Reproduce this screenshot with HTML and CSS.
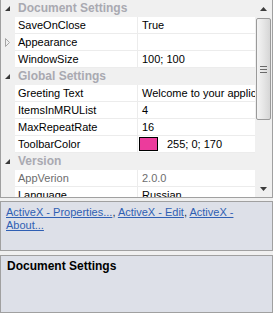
FILE: index.html
```html
<!DOCTYPE html>
<html lang="en">
<head>
  <meta charset="UTF-8" />
  <meta name="viewport" content="width=device-width, initial-scale=1.0">
  <title>Property Grid</title>
  <link rel="stylesheet" href="styles.css">
</head>

<body>

  <div class="grid">
    <div class="rows">

      <div class="category">
        <span class="gutter">
          <svg width="5" height="5" viewBox="0 0 5 5"><polygon points="5,0 5,5 0,5" fill="#3a3a3a" /></svg>
        </span>
        <span class="category-name">Document Settings</span>
      </div>
      <div class="row">
        <span class="gutter"></span>
        <span class="name">SaveOnClose</span>
        <span class="value">True</span>
      </div>
      <div class="row">
        <span class="gutter">
          <svg width="5" height="9" viewBox="0 0 5 9"><polygon points="0.5,0.5 4.5,4.5 0.5,8.5" fill="none" stroke="#a6a6a6" /></svg>
        </span>
        <span class="name">Appearance</span>
        <span class="value"></span>
      </div>
      <div class="row">
        <span class="gutter"></span>
        <span class="name">WindowSize</span>
        <span class="value">100; 100</span>
      </div>

      <div class="category">
        <span class="gutter">
          <svg width="5" height="5" viewBox="0 0 5 5"><polygon points="5,0 5,5 0,5" fill="#3a3a3a" /></svg>
        </span>
        <span class="category-name">Global Settings</span>
      </div>
      <div class="row">
        <span class="gutter"></span>
        <span class="name">Greeting Text</span>
        <span class="value">Welcome to your application</span>
      </div>
      <div class="row">
        <span class="gutter"></span>
        <span class="name">ItemsInMRUList</span>
        <span class="value">4</span>
      </div>
      <div class="row">
        <span class="gutter"></span>
        <span class="name">MaxRepeatRate</span>
        <span class="value">16</span>
      </div>
      <div class="row">
        <span class="gutter"></span>
        <span class="name">ToolbarColor</span>
        <span class="value value-color"><span class="swatch"></span>255; 0; 170</span>
      </div>

      <div class="category">
        <span class="gutter">
          <svg width="5" height="5" viewBox="0 0 5 5"><polygon points="5,0 5,5 0,5" fill="#3a3a3a" /></svg>
        </span>
        <span class="category-name">Version</span>
      </div>
      <div class="row readonly">
        <span class="gutter"></span>
        <span class="name">AppVerion</span>
        <span class="value">2.0.0</span>
      </div>
      <div class="row">
        <span class="gutter"></span>
        <span class="name">Language</span>
        <span class="value">Russian</span>
      </div>

    </div>

    <div class="scrollbar">
      <div class="scroll-btn">
        <svg width="7" height="4" viewBox="0 0 7 4"><polygon points="0,4 7,4 3.5,0" fill="#3c3c3c" /></svg>
      </div>
      <div class="thumb">
        <svg width="7" height="7" viewBox="0 0 7 7">
          <path d="M0 0.5H7M0 3.5H7M0 6.5H7" stroke="#6a6a6a" />
        </svg>
      </div>
      <div class="track"></div>
      <div class="scroll-btn">
        <svg width="7" height="4" viewBox="0 0 7 4"><polygon points="0,0 7,0 3.5,4" fill="#3c3c3c" /></svg>
      </div>
    </div>
  </div>

  <div class="commands">
    <a href="#">ActiveX - Properties...</a><span class="sep">, </span><a href="#">ActiveX - Edit</a><span class="sep">, </span><a href="#">ActiveX - About...</a>
  </div>

  <div class="description">
    <div class="description-title">Document Settings</div>
  </div>

</body>
</html>
```

FILE: styles.css
```css
body {
  margin: 0;
  width: 273px;
  height: 313px;
  overflow: hidden;
  background: #f0f0f0;
  font-family: "Liberation Sans", Arial, sans-serif;
  font-size: 11px;
  color: #000;
}

/* ---------- GRID ---------- */
.grid {
  display: flex;
  height: 198px;
  box-sizing: border-box;
  border-left: 1px solid #a0a0a0;
  border-right: 1px solid #a0a0a0;
  border-bottom: 1px solid #a0a0a0;
  background: #fff;
}

.rows {
  flex: 1;
  min-width: 0;
  overflow: hidden;
}

.row,
.category {
  display: flex;
  height: 17px;
}

.category {
  background: #f0f0f0;
}

.gutter {
  width: 14px;
  flex: none;
  box-sizing: border-box;
  padding-left: 4px;
  display: flex;
  align-items: center;
  background: #f0f0f0;
}

.category-name {
  padding-left: 3px;
  font-size: 12px;
  font-weight: bold;
  line-height: 17px;
  color: #a9a9b1;
  white-space: nowrap;
}

.name,
.value {
  box-sizing: border-box;
  line-height: 16px;
  border-bottom: 1px solid #ececec;
  white-space: nowrap;
  overflow: hidden;
}

.name {
  width: 122px;
  flex: none;
  padding-left: 3px;
}

.value {
  flex: 1;
  min-width: 0;
  padding-left: 4px;
  border-left: 1px solid #ececec;
}

.readonly .name,
.readonly .value {
  color: #6d6d6d;
}

.value-color {
  display: flex;
  align-items: center;
  gap: 9px;
  padding-left: 1px;
}

.swatch {
  width: 19px;
  height: 14px;
  flex: none;
  box-sizing: border-box;
  border: 1px solid #000;
  background: #ec3b9c;
}

/* ---------- SCROLLBAR ---------- */
.scrollbar {
  width: 17px;
  flex: none;
  display: flex;
  flex-direction: column;
  background: #f0f0f0;
}

.scroll-btn {
  height: 17px;
  flex: none;
  display: flex;
  align-items: center;
  justify-content: center;
}

.thumb {
  height: 102px;
  margin: 1px 1px 0 1px;
  box-sizing: border-box;
  border: 1px solid #9a9a9a;
  border-radius: 2px;
  background: linear-gradient(to right, #f4f4f4, #e6e6e6 50%, #d6d6d6);
  display: flex;
  align-items: center;
  justify-content: center;
}

.track {
  flex: 1;
}

/* ---------- PANELS ---------- */
.commands {
  height: 50px;
  margin-top: 3px;
  box-sizing: border-box;
  padding: 4px 5px;
  border: 1px solid #a0a0a0;
  background: #dde0e8;
  line-height: 13px;
}

.commands a {
  color: #2f5fb3;
  text-decoration: underline;
}

.commands .sep {
  color: #1c2c4c;
}

.description {
  height: 58px;
  margin-top: 4px;
  box-sizing: border-box;
  padding: 3px 6px;
  border: 1px solid #a0a0a0;
  background: #dde0e8;
}

.description-title {
  font-size: 12px;
  font-weight: bold;
}
```
